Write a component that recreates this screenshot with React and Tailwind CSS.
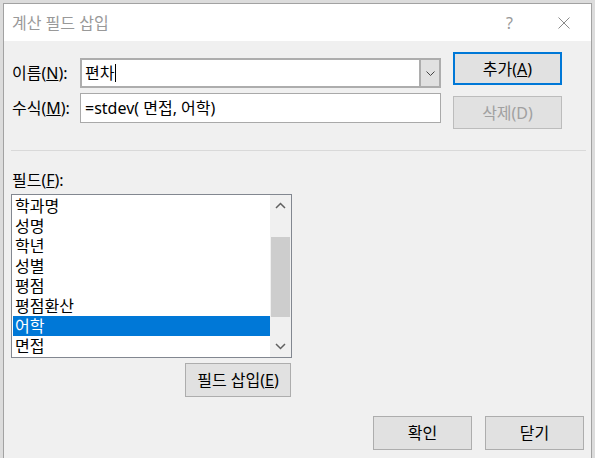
import React from 'react';

const fields = ['학과명', '성명', '학년', '성별', '평점', '평점환산', '어학', '면접'];

function Chevron({ up }) {
  return (
    <svg width="11" height="7" viewBox="0 0 11 7" fill="none">
      <path
        d={up ? 'M1 6 L5.5 1.5 L10 6' : 'M1 1 L5.5 5.5 L10 1'}
        stroke="#606060"
        strokeWidth="1.5"
      />
    </svg>
  );
}

function Button({ children, className = '' }) {
  return (
    <button className={`flex items-center justify-center bg-[#e1e1e1] border border-[#adadad] text-[16px] text-black leading-[20px] ${className}`}>
      {children}
    </button>
  );
}

export default function App() {
  return (
    <div className="w-[595px] h-[458px] overflow-hidden bg-[#dcdcdc] pl-[3px] pt-[3px] font-['Noto_Sans','Noto_Sans_CJK_KR',sans-serif]">
      <div className="w-[589px] h-[455px] border border-b-0 border-[#a2a2a2] flex flex-col">
        {/* title bar */}
        <div className="h-[37px] bg-white flex items-center pl-[8px] pr-[21px] text-[16px] text-[#999999]">
          <span>계산 필드 삽입</span>
          <div className="ml-auto flex items-center">
            <span className="text-[16px] leading-none">?</span>
            <svg className="ml-[45px]" width="12" height="12" viewBox="0 0 12 12">
              <path d="M0.5 0.5 L11.5 11.5 M11.5 0.5 L0.5 11.5" stroke="#8a8a8a" strokeWidth="1" />
            </svg>
          </div>
        </div>

        {/* body */}
        <div className="flex-1 bg-[#f0f0f0] text-[16px] text-black">
          <div className="flex pl-[8px]">
            <div className="mt-[17px] flex flex-col gap-[5px]">
              <div className="flex items-center h-[30px]">
                <span className="w-[68px] leading-[20px]">이름(<span className="underline">N</span>):</span>
                <div className="flex w-[361px] h-[30px] border-2 border-[#adadad] bg-white">
                  <div className="flex-1 flex items-center pl-[3px] leading-[20px]">
                    편차
                    <span className="inline-block w-px h-[18px] bg-black ml-[1px]" />
                  </div>
                  <div className="w-[20px] border-l-2 border-[#adadad] bg-[#e1e1e1] flex items-center justify-center">
                    <svg width="9" height="5" viewBox="0 0 9 5" fill="none">
                      <path d="M0.5 0.5 L4.5 4.5 L8.5 0.5" stroke="#444" strokeWidth="1" />
                    </svg>
                  </div>
                </div>
              </div>
              <div className="flex items-center h-[30px]">
                <span className="w-[68px] leading-[20px]">수식(<span className="underline">M</span>):</span>
                <div className="w-[361px] h-[30px] border border-[#a9a9a9] bg-white flex items-center pl-[4px] leading-[20px]">
                  =stdev( 면접, 어학)
                </div>
              </div>
            </div>
            <div className="ml-[12px] mt-[11px] flex flex-col gap-[11px]">
              <button className="w-[109px] h-[33px] flex items-center justify-center bg-[#e1e1e1] border-2 border-[#0078d7] leading-[20px]">
                추가(<span className="underline">A</span>)
              </button>
              <button className="w-[109px] h-[33px] flex items-center justify-center bg-[#e1e1e1] border border-[#bcbcbc] text-[#a0a0a0] leading-[20px]">
                삭제(D)
              </button>
            </div>
          </div>

          <div className="mt-[21px] ml-[7px] w-[575px] h-px bg-[#d9d9d9]" />

          <div className="mt-[19px] pl-[8px] h-[20px] leading-[20px]">
            필드(<span className="underline">F</span>):
          </div>

          <div className="mt-[4px] ml-[7px] w-[281px] h-[164px] border border-[#828790] bg-white flex">
            <div className="pl-[1px] pt-[1px] w-[258px] overflow-hidden">
              {fields.map((f) => (
                <div
                  key={f}
                  className={`h-[20px] leading-[20px] pl-[2px] ${f === '어학' ? 'bg-[#0078d7] text-white' : ''}`}
                >
                  {f}
                </div>
              ))}
            </div>
            <div className="w-[21px] bg-[#f0f0f0] flex flex-col">
              <div className="h-[21px] flex items-center justify-center">
                <Chevron up />
              </div>
              <div className="mt-[21px] mx-auto w-[19px] h-[80px] bg-[#cdcdcd]" />
              <div className="flex-1" />
              <div className="h-[21px] flex items-center justify-center">
                <Chevron />
              </div>
            </div>
          </div>

          <Button className="mt-[5px] ml-[181px] w-[106px] h-[34px]">
            필드 삽입(<span className="underline">E</span>)
          </Button>

          <div className="mt-[19px] flex justify-end gap-[13px] pr-[7px]">
            <Button className="w-[99px] h-[34px]">확인</Button>
            <Button className="w-[99px] h-[34px]">닫기</Button>
          </div>
        </div>
      </div>
    </div>
  );
}
